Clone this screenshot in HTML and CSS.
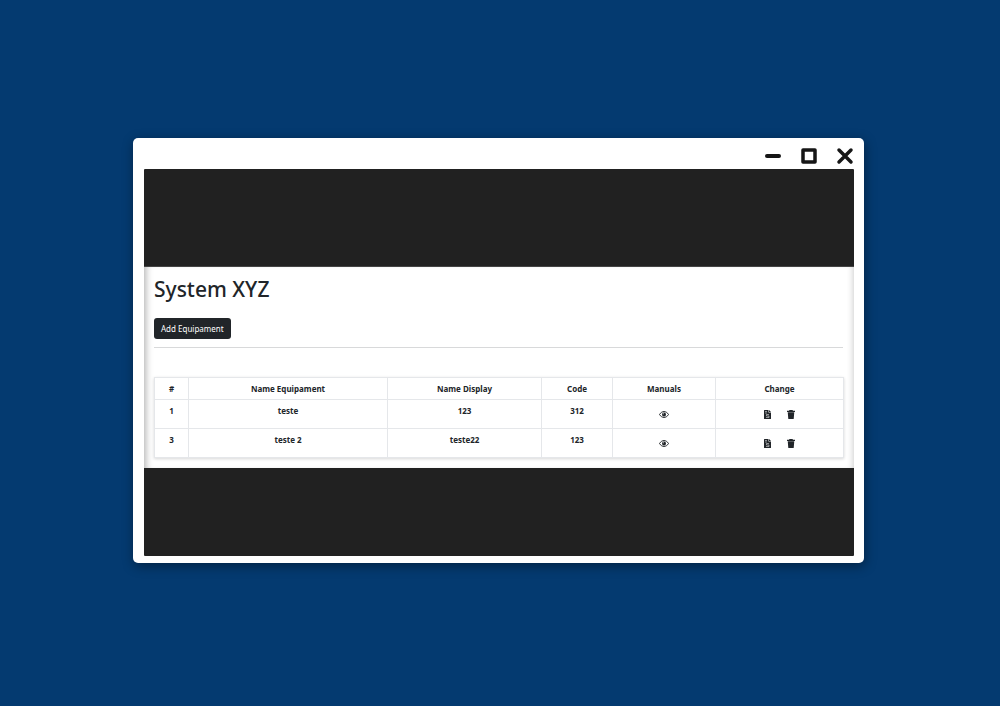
FILE: index.html
```
<!DOCTYPE html>
<html lang="en">
<head>
<meta charset="utf-8">
<title>System XYZ</title>
<link rel="stylesheet" href="styles.css">
</head>
<body>
<svg class="symbols" aria-hidden="true">
  <symbol id="eye" viewBox="0 0 20 14">
    <path d="M1 7C3.500 3 6.500 1.200 10 1.200S16.500 3 19 7c-2.500 4-5.500 5.800-9 5.800S3.500 11 1 7z" fill="none" stroke="currentColor" stroke-width="2"/>
    <circle cx="10" cy="7" r="4"/>
    <circle cx="8.600" cy="5.600" r="1.100" fill="#fff"/>
  </symbol>
  <symbol id="file" viewBox="0 0 14 18">
    <path d="M1 0h8v5h5v12a1 1 0 0 1-1 1H1a1 1 0 0 1-1-1V1a1 1 0 0 1 1-1zM10 0l4 4h-4z"/>
    <path d="M2 3h4M2 6h4M10 9H5v3h5v3H4" fill="none" stroke="#fff" stroke-width="1"/>
  </symbol>
  <symbol id="trash" viewBox="0 0 16 18">
    <path d="M5 0h6l1 1.500h4V4H0V1.500h4zM1.500 4.500h13l-1 12.500a1 1 0 0 1-1 1h-9a1 1 0 0 1-1-1z"/>
  </symbol>
</svg>
<div class="window">
  <header class="titlebar">
    <button class="control" type="button" aria-label="Minimize"><svg viewBox="0 0 18 18"><path d="M3 9h12" stroke-width="4"/></svg></button>
    <button class="control" type="button" aria-label="Maximize"><svg viewBox="0 0 18 18"><path d="M3 3h12v12H3z" stroke-width="3.500"/></svg></button>
    <button class="control" type="button" aria-label="Close"><svg viewBox="0 0 18 18"><path d="M3 3l12 12M15 3L3 15" stroke-width="3.500"/></svg></button>
  </header>
  <div class="screen">
    <main class="content">
      <h1 class="title">System XYZ</h1>
      <button class="add" type="button">Add Equipament</button>
      <hr class="rule">
      <table class="equipment">
        <colgroup><col class="col-id"><col class="col-name"><col class="col-display"><col class="col-code"><col class="col-manuals"><col class="col-change"></colgroup>
        <thead>
          <tr><th>#</th><th>Name Equipament</th><th>Name Display</th><th>Code</th><th>Manuals</th><th>Change</th></tr>
        </thead>
        <tbody>
          <tr>
            <th>1</th><td>teste</td><td>123</td><td>312</td>
            <td><button class="action" type="button" aria-label="View manuals"><svg class="eye"><use href="#eye"/></svg></button></td>
            <td><div class="actions"><button class="action" type="button" aria-label="Edit"><svg class="file"><use href="#file"/></svg></button><button class="action" type="button" aria-label="Delete"><svg class="trash"><use href="#trash"/></svg></button></div></td>
          </tr>
          <tr>
            <th>3</th><td>teste 2</td><td>teste22</td><td>123</td>
            <td><button class="action" type="button" aria-label="View manuals"><svg class="eye"><use href="#eye"/></svg></button></td>
            <td><div class="actions"><button class="action" type="button" aria-label="Edit"><svg class="file"><use href="#file"/></svg></button><button class="action" type="button" aria-label="Delete"><svg class="trash"><use href="#trash"/></svg></button></div></td>
          </tr>
        </tbody>
      </table>
    </main>
  </div>
</div>
</body>
</html>
```
FILE: styles.css
```
* { box-sizing: border-box; }
body {
  margin: 0;
  min-height: 100vh;
  padding: 138px 136px 138px 133px;
  background: #043a70;
  color: #212529;
  font-family: "Noto Sans", "Open Sans", sans-serif;
}
button { border: 0; padding: 0; background: none; color: inherit; font: inherit; }
.symbols { display: none; }
.window {
  padding: 0 10px 7px 11px;
  border-radius: 5px;
  background: #fff;
  box-shadow: 1px 3px 12px rgba(0, 0, 0, 0.4);
}
.titlebar {
  display: flex;
  justify-content: flex-end;
  align-items: center;
  gap: 18px;
  height: 31px;
  padding-top: 5px;
}
.control { display: flex; }
.control svg {
  width: 18px;
  height: 18px;
  fill: none;
  stroke: #161616;
  stroke-linecap: round;
  stroke-linejoin: round;
}
.screen {
  padding: 97px 0 88px;
  border-radius: 1px;
  background: #212121;
}
.content {
  padding: 7px 11px 10px 10px;
  border-top: 1px solid #444;
  background: #fff;
  box-shadow: inset 7px 0 7px -5px rgba(0, 0, 0, 0.3), inset -6px 0 6px -5px rgba(0, 0, 0, 0.2);
}
.title {
  margin: 0 0 14px;
  font-size: 21px;
  font-weight: 500;
  line-height: 30px;
}
.add {
  display: block;
  height: 21px;
  padding: 0 7px;
  border-radius: 3px;
  background: #212529;
  color: #fff;
  font-size: 8px;
}
.rule {
  margin: 8px 0 29px;
  border: 0;
  border-top: 1px solid #d8d9da;
}
.equipment {
  width: 100%;
  table-layout: fixed;
  border-collapse: collapse;
  box-shadow: 0 1px 3px rgba(0, 0, 0, 0.16);
  font-size: 8px;
  font-weight: 700;
  line-height: 12px;
  text-align: center;
}
.equipment th, .equipment td {
  padding: 5px 4px 4px;
  border: 1px solid #e5e7ea;
  vertical-align: top;
}
.equipment tbody th, .equipment tbody td { height: 29px; }
.col-id { width: 34px; }
.col-name { width: 199px; }
.col-display { width: 154px; }
.col-code { width: 71px; }
.col-manuals { width: 103px; }
.col-change { width: 128px; }
.action { display: inline-flex; align-items: center; height: 18px; }
.actions { display: flex; justify-content: center; gap: 16px; }
.action svg { fill: currentColor; }
.eye { width: 10px; height: 7px; }
.file { width: 7px; height: 9px; }
.trash { width: 8px; height: 9px; }
```
